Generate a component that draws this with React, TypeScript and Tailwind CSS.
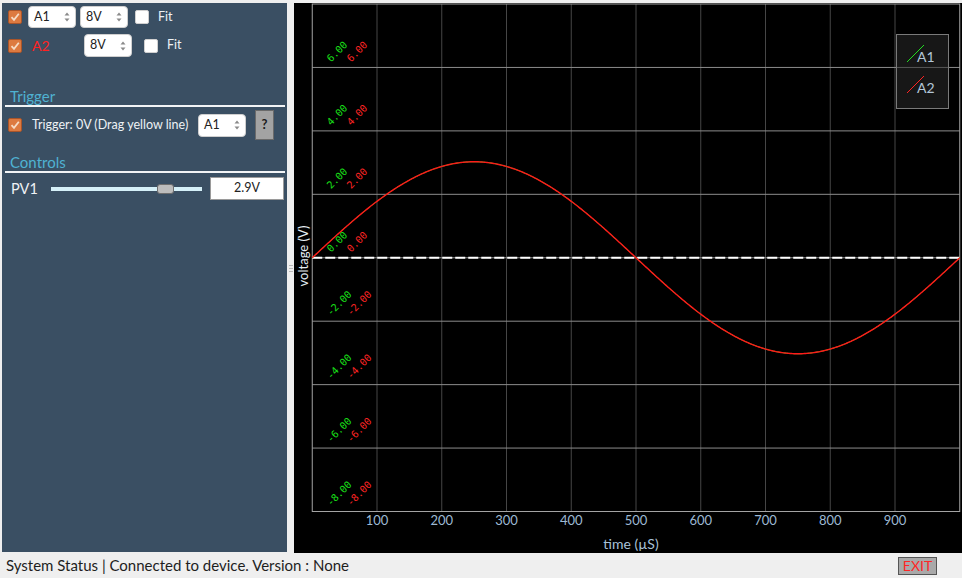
import React from "react";

const X0 = 312.25;
const X1 = 959.75;
const Y0 = 4;
const Y1 = 511.5;
const tx = (t: number) => X0 + ((X1 - X0) * t) / 1000;
const vy = (v: number) => Y0 + ((8 - v) * (Y1 - Y0)) / 16;

const wave = Array.from({ length: 501 }, (_, i) => {
  const t = i * 2;
  return `${tx(t).toFixed(2)},${(vy(0) - 96 * Math.sin((2 * Math.PI * t) / 1000)).toFixed(2)}`;
}).join(" ");

function OrangeCheck() {
  return (
    <span className="flex h-[14px] w-[14px] shrink-0 items-center justify-center rounded-[2px] border border-[#a9552a] bg-[#dd7a40]">
      <svg width="10" height="10" viewBox="0 0 10 10">
        <path d="M1.5 5.2 L4 7.8 L8.8 1.8" fill="none" stroke="#f6dcc6" strokeWidth="1.8" />
      </svg>
    </span>
  );
}

function WhiteBox() {
  return <span className="block h-[14px] w-[14px] shrink-0 rounded-[2px] border border-[#d0d0d0] bg-white" />;
}

function SpinBox({ label, className = "" }: { label: string; className?: string }) {
  return (
    <div
      className={
        "flex h-[22px] w-[48px] shrink-0 items-center justify-between rounded-[4px] border border-[#cfcfcf] bg-white pl-[5px] pr-[5px] text-[12.5px] text-[#222] " +
        className
      }
    >
      <span>{label}</span>
      <svg width="6" height="12" viewBox="0 0 6 12">
        <path d="M0.5 4.5 L3 1.5 L5.5 4.5 Z" fill="#8a8a8a" />
        <path d="M0.5 7.5 L3 10.5 L5.5 7.5 Z" fill="#8a8a8a" />
      </svg>
    </div>
  );
}

function Heading({ children }: { children: React.ReactNode }) {
  return (
    <div>
      <div className="pl-[8px] text-[15px] leading-[18px] text-[#4fb2d2]">{children}</div>
      <div className="ml-[3px] mr-[2px] h-[2px] bg-[#f2f4f6]" />
    </div>
  );
}

function Chart() {
  const hLines = [6, 4, 2, 0, -2, -4, -6];
  const labels = [6, 4, 2, 0, -2, -4, -6, -8];
  return (
    <svg width="668" height="550" viewBox="294 3 668 550" className="block">
      {Array.from({ length: 9 }, (_, i) => (
        <line key={"v" + i} x1={tx((i + 1) * 100)} x2={tx((i + 1) * 100)} y1={Y0} y2={Y1} stroke="#464646" strokeWidth="1" />
      ))}
      {hLines.map((v) => (
        <line key={"h" + v} x1={X0} x2={X1} y1={vy(v)} y2={vy(v)} stroke="#8c8c8c" strokeWidth="1" />
      ))}
      <rect x={X0} y={Y0} width={X1 - X0} height={Y1 - Y0} fill="none" stroke="#a4a4a4" strokeWidth="1" />

      {labels.map((v) => {
        const y = vy(v) - 5;
        const txt = v.toFixed(2);
        return (
          <g key={"l" + v} fontFamily="'DejaVu Sans Mono', monospace" fontSize="10">
            <text x={331} y={y} fill="#19e019" transform={`rotate(-45 331 ${y})`}>
              {txt}
            </text>
            <text x={351} y={y} fill="#ff2424" transform={`rotate(-45 351 ${y})`}>
              {txt}
            </text>
          </g>
        );
      })}

      <line x1={X0} x2={X1} y1={vy(0)} y2={vy(0)} stroke="#ffffff" strokeWidth="2" strokeDasharray="10 3" />

      <polyline points={wave} fill="none" stroke="#16d616" strokeWidth="1" />
      <polyline points={wave} fill="none" stroke="#ff1a1a" strokeWidth="1.4" />

      {Array.from({ length: 9 }, (_, i) => (
        <text
          key={"x" + i}
          x={tx((i + 1) * 100)}
          y={525}
          textAnchor="middle"
          fill="#9db9d3"
          fontSize="13"
          fontFamily="Lato, sans-serif"
        >
          {(i + 1) * 100}
        </text>
      ))}
      <text x={631} y={549} textAnchor="middle" fill="#a8c2d8" fontSize="14" fontFamily="Lato, sans-serif">
        time (µS)
      </text>
      <text
        x={308}
        y={256}
        textAnchor="middle"
        fill="#e4ecf2"
        fontSize="13"
        fontFamily="Lato, sans-serif"
        transform="rotate(-90 308 256)"
      >
        voltage (V)
      </text>

      <rect x={896.5} y={34.5} width={52} height={74} fill="#2a2a2a" fillOpacity="0.55" stroke="#7a7a7a" strokeWidth="1" />
      <line x1={907} y1={62} x2={924} y2={45} stroke="#22dd22" strokeWidth="1" />
      <text x={917} y={62} fill="#b2c6d8" fontSize="14" fontFamily="Lato, sans-serif">
        A1
      </text>
      <line x1={907} y1={93} x2={924} y2={76} stroke="#ff2222" strokeWidth="1" />
      <text x={917} y={93} fill="#b2c6d8" fontSize="14" fontFamily="Lato, sans-serif">
        A2
      </text>
    </svg>
  );
}

export default function App() {
  return (
    <div
      className="flex h-[578px] w-[962px] flex-col overflow-hidden bg-[#efefef]"
      style={{ fontFamily: "Lato, 'Open Sans', sans-serif" }}
    >
      <div className="flex h-[553px] pl-[2px] pt-[3px]">
        <aside className="flex h-[549px] w-[285px] flex-col bg-[#3a4f63] text-[12.5px] text-[#eef2f5]">
          <div className="mt-[3px] flex h-[22px] items-center">
            <span className="ml-[6px]">
              <OrangeCheck />
            </span>
            <SpinBox label="A1" className="ml-[6px]" />
            <SpinBox label="8V" className="ml-[4px] w-[47px]" />
            <span className="ml-[7px]">
              <WhiteBox />
            </span>
            <span className="ml-[9px]">Fit</span>
          </div>

          <div className="mt-[6px] flex h-[23px] items-center">
            <span className="ml-[6px]">
              <OrangeCheck />
            </span>
            <span className="ml-[10px] w-[52px] text-[14px] text-[#ff2222]">A2</span>
            <SpinBox label="8V" className="h-[23px]" />
            <span className="ml-[12px]">
              <WhiteBox />
            </span>
            <span className="ml-[9px]">Fit</span>
          </div>

          <div className="mt-[30px]">
            <Heading>Trigger</Heading>
          </div>

          <div className="mt-[3px] flex h-[30px] items-center">
            <span className="ml-[6px]">
              <OrangeCheck />
            </span>
            <span className="ml-[10px] w-[166px]">Trigger: 0V (Drag yellow line)</span>
            <SpinBox label="A1" className="h-[23px]" />
            <button className="ml-[9px] flex h-[30px] w-[19px] items-center justify-center border border-[#6a6a6a] bg-[#a3a3a3] text-[13px] font-bold text-[#1a1a1a]">
              ?
            </button>
          </div>

          <div className="mt-[13px]">
            <Heading>Controls</Heading>
          </div>

          <div className="mt-[4px] flex h-[23px] items-center">
            <span className="ml-[9px] w-[40px] text-[14.5px]">PV1</span>
            <div className="flex h-[10px] w-[151px] items-center">
              <div className="h-[4px] w-[106px] bg-[#d5f0f8]" />
              <div className="h-[10px] w-[17px] rounded-[3px] border border-[#6e6e6e] bg-[#bdbdbd]" />
              <div className="h-[4px] flex-1 bg-[#d5f0f8]" />
            </div>
            <div className="ml-[8px] flex h-[23px] w-[74px] items-center justify-center border border-[#9a9a9a] bg-white text-[12.5px] text-[#222]">
              2.9V
            </div>
          </div>
        </aside>

        <div className="flex w-[7px] flex-col items-center justify-center gap-[2px] pb-[20px]">
          <span className="h-[1px] w-[4px] bg-[#b8b8b8]" />
          <span className="h-[1px] w-[4px] bg-[#b8b8b8]" />
          <span className="h-[1px] w-[4px] bg-[#b8b8b8]" />
        </div>

        <div className="h-[550px] flex-1 bg-black">
          <Chart />
        </div>
      </div>

      <footer className="flex h-[25px] items-center justify-between pl-[6px] pr-[25px] text-[15px] text-[#1e1e1e]">
        <span>System Status | Connected to device. Version : None</span>
        <span className="flex h-[18px] w-[39px] items-center justify-center border border-[#555] bg-[#a9a9a9] text-[14px] text-[#ff2626]">
          EXIT
        </span>
      </footer>
    </div>
  );
}
